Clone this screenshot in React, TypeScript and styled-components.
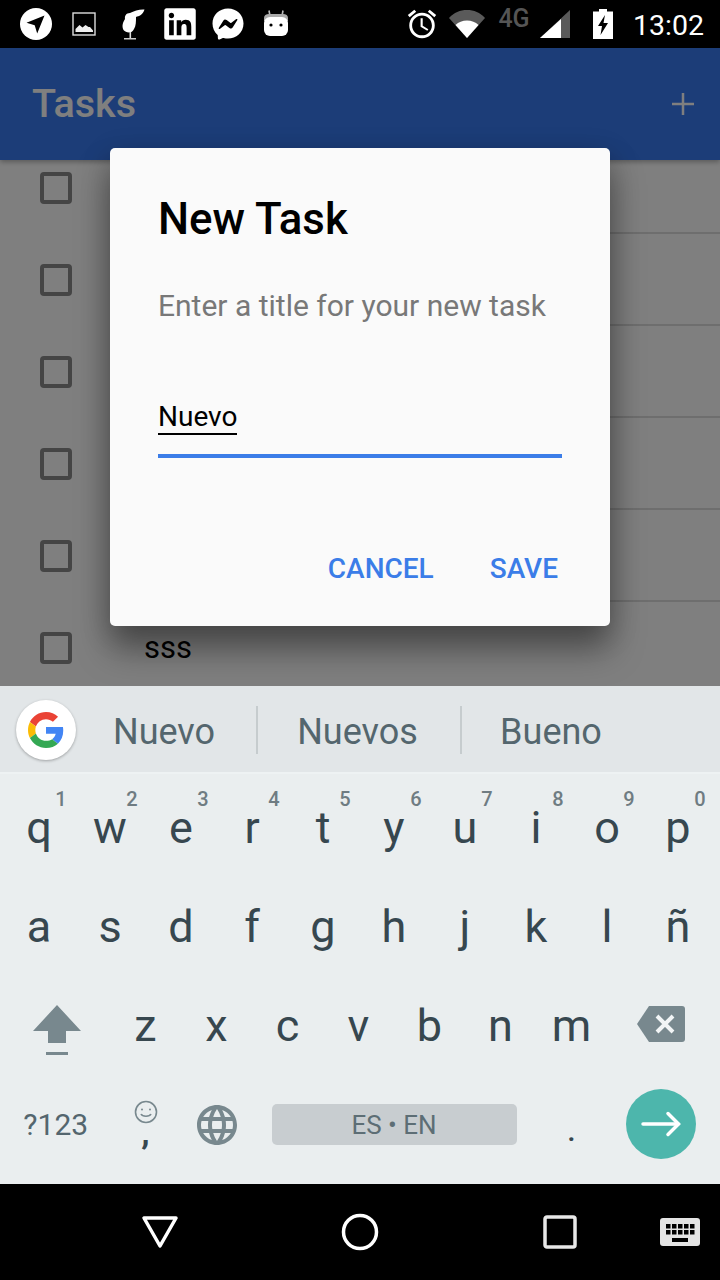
import React from "react"
import styled, {createGlobalStyle} from "styled-components"
import {FaLinkedin, FaFacebookMessenger} from "react-icons/fa"
import {MdAccessAlarm, MdLanguage} from "react-icons/md"

const GlobalStyle = createGlobalStyle`
  html, body {
    margin: 0;
    padding: 0;
    background: #000;
  }
  * {
    box-sizing: border-box;
  }
`

const Screen = styled.div`
  position: relative;
  width: 720px;
  height: 1280px;
  display: flex;
  flex-direction: column;
  overflow: hidden;
  font-family: Roboto, "Liberation Sans", sans-serif;
`

const StatusBar = styled.div`
  height: 48px;
  flex: none;
  background: #000;
  color: #fff;
  display: flex;
  align-items: center;
  justify-content: space-between;
  padding: 0 16px 0 12px;
`

const StatusGroup = styled.div`
  display: flex;
  align-items: center;
`

const Slot = styled.div<{$w: number}>`
  width: ${(p) => p.$w}px;
  height: 48px;
  display: flex;
  align-items: center;
  justify-content: center;
`

const NetworkLabel = styled.span`
  font-size: 25px;
  font-weight: 500;
  color: #555;
  margin-top: -12px;
`

const Clock = styled.span`
  font-size: 28.5px;
  color: #fff;
  margin-top: 2px;
`

const Stage = styled.div`
  position: relative;
  height: 638px;
  flex: none;
  overflow: hidden;
  background: #fff;
`

const AppBar = styled.div`
  position: relative;
  height: 112px;
  background: #397af0;
  display: flex;
  align-items: center;
  justify-content: space-between;
  padding: 0 24px 0 32px;
  box-shadow: 0 2px 5px rgba(0, 0, 0, 0.3);
  z-index: 1;
`

const AppTitle = styled.span`
  color: #fff;
  font-size: 39.5px;
  font-weight: 500;
  margin-top: -2px;
`

const TaskList = styled.div`
  margin-top: -18px;
`

const TaskRow = styled.div`
  height: 92px;
  padding-left: 40px;
  display: flex;
  align-items: center;
`

const Check = styled.div`
  width: 32px;
  height: 32px;
  flex: none;
  border: 4px solid #8a8a8a;
  border-radius: 4px;
`

const TaskBody = styled.div`
  flex: 1;
  height: 92px;
  margin-left: 72px;
  display: flex;
  align-items: center;
  border-bottom: 2px solid #dcdcdc;
`

const TaskName = styled.span`
  font-size: 31px;
  color: #000;
`

const Scrim = styled.div`
  position: absolute;
  inset: 0;
  z-index: 2;
  background: rgba(0, 0, 0, 0.5);
`

const Dialog = styled.div`
  position: absolute;
  left: 110px;
  top: 100px;
  width: 500px;
  height: 478px;
  z-index: 3;
  background: #fafafa;
  border-radius: 5px;
  padding: 41px 48px 0 49px;
  box-shadow: 0 24px 34px rgba(0, 0, 0, 0.36), 0 8px 30px rgba(0, 0, 0, 0.2);
`

const DialogTitle = styled.div`
  font-size: 43.8px;
  line-height: 60px;
  font-weight: 500;
  color: #000;
  margin-left: -1px;
`

const DialogText = styled.div`
  margin-top: 39px;
  margin-left: -1px;
  font-size: 30px;
  line-height: 36px;
  color: #787878;
`

const Field = styled.div`
  margin-top: 76px;
  margin-left: -1px;
  height: 58px;
  border-bottom: 4px solid #3b7de8;
`

const FieldText = styled.span`
  display: inline-block;
  font-size: 28px;
  line-height: 33px;
  color: #000;
  border-bottom: 2px solid #000;
`

const DialogActions = styled.div`
  margin-top: 91px;
  display: flex;
  justify-content: flex-end;
  gap: 56px;
  padding-right: 4px;
`

const ActionButton = styled.span`
  font-size: 28px;
  font-weight: 500;
  line-height: 40px;
  color: #3b7de8;
`

const Keyboard = styled.div`
  height: 498px;
  flex: none;
  background: #eaeeef;
`

const Suggestions = styled.div`
  height: 88px;
  padding: 2px 0 0 16px;
  background: #e2e6e8;
  border-bottom: 2px solid #eef2f3;
  display: flex;
  align-items: center;
`

const GoogleBadge = styled.div`
  width: 60px;
  height: 60px;
  flex: none;
  border-radius: 50%;
  background: #fff;
  box-shadow: 0 1px 3px rgba(0, 0, 0, 0.3);
  display: flex;
  align-items: center;
  justify-content: center;
  margin-right: 4px;
`

const Suggestion = styled.div<{$w: number; $nudge: number; $divider?: boolean}>`
  width: ${(p) => p.$w}px;
  height: 48px;
  display: flex;
  align-items: center;
  justify-content: center;
  padding: 4px ${(p) => p.$nudge}px 0 0;
  font-size: 36px;
  color: #54666e;
  border-left: ${(p) => (p.$divider ? "2px solid #c6ccce" : "none")};
`

const KeyRows = styled.div`
  padding: 4px 6.5px 0 3.5px;
`

const KeyRow = styled.div`
  height: 99px;
  display: flex;
`

const Key = styled.div<{$span?: number}>`
  position: relative;
  flex: ${(p) => p.$span ?? 1} 0 0;
  display: flex;
  align-items: center;
  justify-content: center;
  font-size: 45px;
  color: #37474f;
`

const Hint = styled.span`
  position: absolute;
  top: 9px;
  right: 8px;
  font-size: 20px;
  font-weight: 500;
  line-height: 24px;
  color: #6f7c82;
`

const SymbolKey = styled.span`
  font-size: 30px;
  color: #54666e;
  margin-left: -2px;
`

const EmojiStack = styled.div`
  display: flex;
  flex-direction: column;
  align-items: center;
  margin-top: -10px;
`

const Comma = styled.span`
  font-size: 34px;
  line-height: 16px;
  font-weight: 700;
  color: #37474f;
`

const SpaceBar = styled.div`
  width: 245px;
  height: 41px;
  border-radius: 5px;
  background: #c8cdd0;
  display: flex;
  align-items: center;
  justify-content: center;
  font-size: 26px;
  color: #5d6e75;
`

const Period = styled.span`
  font-size: 30px;
  font-weight: 500;
  margin-top: 12px;
`

const ShiftGlyph = styled.div`
  display: flex;
  margin-top: 8px;
`

const BackspaceGlyph = styled.div`
  display: flex;
  margin: -4px 0 0 2px;
`

const GoButton = styled.div`
  width: 70px;
  height: 70px;
  margin: -2px 0 0 2px;
  border-radius: 50%;
  background: #4db6ac;
  display: flex;
  align-items: center;
  justify-content: center;
`

const NavBar = styled.div`
  height: 96px;
  flex: none;
  background: #000;
  display: flex;
  align-items: center;
  padding-left: 60px;
`

const NavSlot = styled.div`
  width: 200px;
  height: 96px;
  display: flex;
  align-items: center;
  justify-content: center;
`

const KeyboardToggle = styled.div`
  flex: 1;
  display: flex;
  justify-content: flex-end;
  padding-right: 20px;
`

const TOP_ROW: [string, string][] = [
  ["q", "1"],
  ["w", "2"],
  ["e", "3"],
  ["r", "4"],
  ["t", "5"],
  ["y", "6"],
  ["u", "7"],
  ["i", "8"],
  ["o", "9"],
  ["p", "0"],
]
const MIDDLE_ROW = ["a", "s", "d", "f", "g", "h", "j", "k", "l", "ñ"]
const BOTTOM_ROW = ["z", "x", "c", "v", "b", "n", "m"]
const TASKS = ["", "", "", "", "", "sss"]

function NavArrowIcon() {
  return (
    <svg width="32" height="32" viewBox="0 0 32 32">
      <circle cx="16" cy="16" r="16" fill="#fff" />
      <path d="M24.500 7.500 6.500 14.800l8.200 2.500 2.500 8.200z" fill="#000" />
    </svg>
  )
}

function PictureIcon() {
  return (
    <svg width="24" height="24" viewBox="0 0 24 24">
      <rect x="1" y="1" width="22" height="22" fill="none" stroke="#ddd" strokeWidth="1.400" />
      <path d="M3.500 20v-3l4-4 3 2.500 3-2.500 3 2h1.500l3 3.500V20z" fill="#eee" />
    </svg>
  )
}

function ToucanIcon() {
  return (
    <svg width="26" height="32" viewBox="0 0 26 32">
      <path
        d="M25.500 1.500C21 1 15 3 11 5 7 5 5.500 8 6 11c-2 3-3.500 7-1.500 11 2.500 3 8.500 4 10.500-1 2-3 2-8 2-12 3-1 7-2 8.500-7.500z"
        fill="#fff"
      />
      <path d="M10.500 24h1.600v6h-1.600z" fill="#ddd" />
      <path d="M5 30h12v1.500H5z" fill="#ccc" />
    </svg>
  )
}

function AndroidIcon() {
  return (
    <svg width="24" height="30" viewBox="0 0 24 30">
      <path d="M5 1.500 6 7M19 1.500 18 7" stroke="#bbb" strokeWidth="1.600" />
      <path d="M5 5h14c3 0 5 1.500 5 4v3H0V9c0-2.500 2-4 5-4z" fill="#aaa" />
      <rect y="8" width="24" height="19" rx="6" fill="#fff" />
      <circle cx="7" cy="16" r="1.600" fill="#000" />
      <circle cx="17" cy="16" r="1.600" fill="#000" />
    </svg>
  )
}

function WifiIcon() {
  return (
    <svg width="36" height="30" viewBox="0 0 36 30">
      <path d="M18 29 0 9C5 3.500 11 1 18 1s13 2.500 18 8z" fill="#5a5a5a" />
      <path d="M18 29 6.500 16C9.500 13 13.500 11.500 18 11.500S26.500 13 29.500 16z" fill="#fff" />
    </svg>
  )
}

function SignalIcon() {
  return (
    <svg width="32" height="30" viewBox="0 0 32 30">
      <path d="M31 1v28H1z" fill="#5a5a5a" />
      <path d="M22 10v19H1z" fill="#fff" />
    </svg>
  )
}

function BatteryIcon() {
  return (
    <svg width="20" height="30" viewBox="0 0 20 30">
      <path d="M6 0h8v2.500h6V30H0V2.500h6z" fill="#fff" />
      <path d="M12 6 5 17h4l-1.500 9L15 14h-4.500z" fill="#000" />
    </svg>
  )
}

function GoogleIcon() {
  return (
    <svg width="36" height="36" viewBox="0 0 48 48">
      <path fill="#EA4335" d="M24 9.500c3.540 0 6.710 1.220 9.210 3.600l6.850-6.850C35.900 2.380 30.470 0 24 0 14.620 0 6.510 5.380 2.560 13.220l7.980 6.190C12.430 13.720 17.740 9.500 24 9.500z" />
      <path fill="#4285F4" d="M46.980 24.550c0-1.570-.15-3.090-.38-4.550H24v9.020h12.940c-.58 2.960-2.260 5.480-4.780 7.180l7.730 6c4.510-4.180 7.090-10.360 7.090-17.650z" />
      <path fill="#FBBC05" d="M10.530 28.590c-.48-1.450-.76-2.990-.76-4.590s.27-3.140.76-4.590l-7.980-6.190C.92 16.460 0 20.120 0 24c0 3.880.92 7.540 2.560 10.780l7.970-6.190z" />
      <path fill="#34A853" d="M24 48c6.480 0 11.930-2.130 15.890-5.810l-7.730-6c-2.150 1.450-4.920 2.300-8.160 2.300-6.260 0-11.570-4.220-13.470-9.910l-7.980 6.190C6.510 42.620 14.620 48 24 48z" />
    </svg>
  )
}

function ShiftIcon() {
  return (
    <svg width="48" height="50" viewBox="0 0 48 50">
      <path d="M24 0 48 26H33v12H15V26H0z" fill="#78888e" />
      <rect x="13" y="47" width="22" height="3" fill="#78888e" />
    </svg>
  )
}

function BackspaceIcon() {
  return (
    <svg width="48" height="36" viewBox="0 0 48 36">
      <path d="M12 0h33a3 3 0 0 1 3 3v30a3 3 0 0 1-3 3H12L0 18z" fill="#78888e" />
      <path d="M20 10l16 16M36 10 20 26" stroke="#f2f5f6" strokeWidth="4" />
    </svg>
  )
}

function SmileIcon() {
  return (
    <svg width="24" height="24" viewBox="0 0 24 24" fill="none" stroke="#78888e" strokeWidth="1.600">
      <circle cx="12" cy="12" r="10.500" />
      <circle cx="8" cy="9.500" r="1" fill="#78888e" stroke="none" />
      <circle cx="16" cy="9.500" r="1" fill="#78888e" stroke="none" />
      <path d="M7 14c1.500 3 8.500 3 10 0" />
    </svg>
  )
}

function ArrowIcon() {
  return (
    <svg width="40" height="26" viewBox="0 0 40 26" fill="none" stroke="#fff" strokeWidth="3.500" strokeLinecap="round">
      <path d="M2 13h35" />
      <path d="M27 2.500 37.500 13 27 23.500" />
    </svg>
  )
}

function BackIcon() {
  return (
    <svg width="38" height="34" viewBox="0 0 38 34" fill="none" stroke="#fff" strokeWidth="3.500">
      <path d="M3 3h32L19 31z" strokeLinejoin="round" />
    </svg>
  )
}

function HomeIcon() {
  return (
    <svg width="38" height="38" viewBox="0 0 38 38" fill="none" stroke="#fff" strokeWidth="3.500">
      <circle cx="19" cy="19" r="16.500" />
    </svg>
  )
}

function RecentsIcon() {
  return (
    <svg width="34" height="34" viewBox="0 0 34 34" fill="none" stroke="#e8e8e8" strokeWidth="3.500">
      <rect x="2" y="2" width="30" height="30" rx="2" />
    </svg>
  )
}

function KeyboardIcon() {
  const dots = []
  for (let row = 0; row < 2; row++) {
    for (let col = 0; col < 5; col++) {
      dots.push(<rect key={`${row}-${col}`} x={6 + col * 6} y={6 + row * 6} width="4.500" height="4.500" fill="#000" />)
    }
  }
  return (
    <svg width="40" height="28" viewBox="0 0 40 28">
      <rect width="40" height="28" rx="3" fill="#e4e4e4" />
      {dots}
      <rect x="12" y="20" width="16" height="4" fill="#000" />
    </svg>
  )
}

export default function App() {
  return (
    <Screen>
      <GlobalStyle />
      <StatusBar>
        <StatusGroup>
          <Slot $w={48}>
            <NavArrowIcon />
          </Slot>
          <Slot $w={48}>
            <PictureIcon />
          </Slot>
          <Slot $w={48}>
            <ToucanIcon />
          </Slot>
          <Slot $w={48}>
            <FaLinkedin size={36} />
          </Slot>
          <Slot $w={48}>
            <FaFacebookMessenger size={32} />
          </Slot>
          <Slot $w={48}>
            <AndroidIcon />
          </Slot>
        </StatusGroup>
        <StatusGroup>
          <Slot $w={44}>
            <MdAccessAlarm size={34} />
          </Slot>
          <Slot $w={46}>
            <WifiIcon />
          </Slot>
          <Slot $w={48}>
            <NetworkLabel>4G</NetworkLabel>
          </Slot>
          <Slot $w={34}>
            <SignalIcon />
          </Slot>
          <Slot $w={61}>
            <BatteryIcon />
          </Slot>
          <Clock>13:02</Clock>
        </StatusGroup>
      </StatusBar>

      <Stage>
        <AppBar>
          <AppTitle>Tasks</AppTitle>
          <svg width="26" height="26" viewBox="0 0 26 26">
            <path d="M13 2v22M2 13h22" stroke="#fff" strokeWidth="2.500" />
          </svg>
        </AppBar>
        <TaskList>
          {TASKS.map((name, i) => (
            <TaskRow key={i}>
              <Check />
              <TaskBody>
                <TaskName>{name}</TaskName>
              </TaskBody>
            </TaskRow>
          ))}
        </TaskList>
        <Scrim />
        <Dialog>
          <DialogTitle>New Task</DialogTitle>
          <DialogText>Enter a title for your new task</DialogText>
          <Field>
            <FieldText>Nuevo</FieldText>
          </Field>
          <DialogActions>
            <ActionButton>CANCEL</ActionButton>
            <ActionButton>SAVE</ActionButton>
          </DialogActions>
        </Dialog>
      </Stage>

      <Keyboard>
        <Suggestions>
          <GoogleBadge>
            <GoogleIcon />
          </GoogleBadge>
          <Suggestion $w={176} $nudge={8}>
            Nuevo
          </Suggestion>
          <Suggestion $w={204} $nudge={3} $divider>
            Nuevos
          </Suggestion>
          <Suggestion $w={180} $nudge={0} $divider>
            Bueno
          </Suggestion>
        </Suggestions>
        <KeyRows>
          <KeyRow>
            {TOP_ROW.map(([letter, hint]) => (
              <Key key={letter}>
                {letter}
                <Hint>{hint}</Hint>
              </Key>
            ))}
          </KeyRow>
          <KeyRow>
            {MIDDLE_ROW.map((letter) => (
              <Key key={letter}>{letter}</Key>
            ))}
          </KeyRow>
          <KeyRow>
            <Key $span={1.5}>
              <ShiftGlyph>
                <ShiftIcon />
              </ShiftGlyph>
            </Key>
            {BOTTOM_ROW.map((letter) => (
              <Key key={letter}>{letter}</Key>
            ))}
            <Key $span={1.5}>
              <BackspaceGlyph>
                <BackspaceIcon />
              </BackspaceGlyph>
            </Key>
          </KeyRow>
          <KeyRow>
            <Key $span={1.5}>
              <SymbolKey>?123</SymbolKey>
            </Key>
            <Key>
              <EmojiStack>
                <SmileIcon />
                <Comma>,</Comma>
              </EmojiStack>
            </Key>
            <Key>
              <MdLanguage size={48} color="#78888e" />
            </Key>
            <Key $span={4}>
              <SpaceBar>ES • EN</SpaceBar>
            </Key>
            <Key>
              <Period>.</Period>
            </Key>
            <Key $span={1.5}>
              <GoButton>
                <ArrowIcon />
              </GoButton>
            </Key>
          </KeyRow>
        </KeyRows>
      </Keyboard>

      <NavBar>
        <NavSlot>
          <BackIcon />
        </NavSlot>
        <NavSlot>
          <HomeIcon />
        </NavSlot>
        <NavSlot>
          <RecentsIcon />
        </NavSlot>
        <KeyboardToggle>
          <KeyboardIcon />
        </KeyboardToggle>
      </NavBar>
    </Screen>
  )
}
